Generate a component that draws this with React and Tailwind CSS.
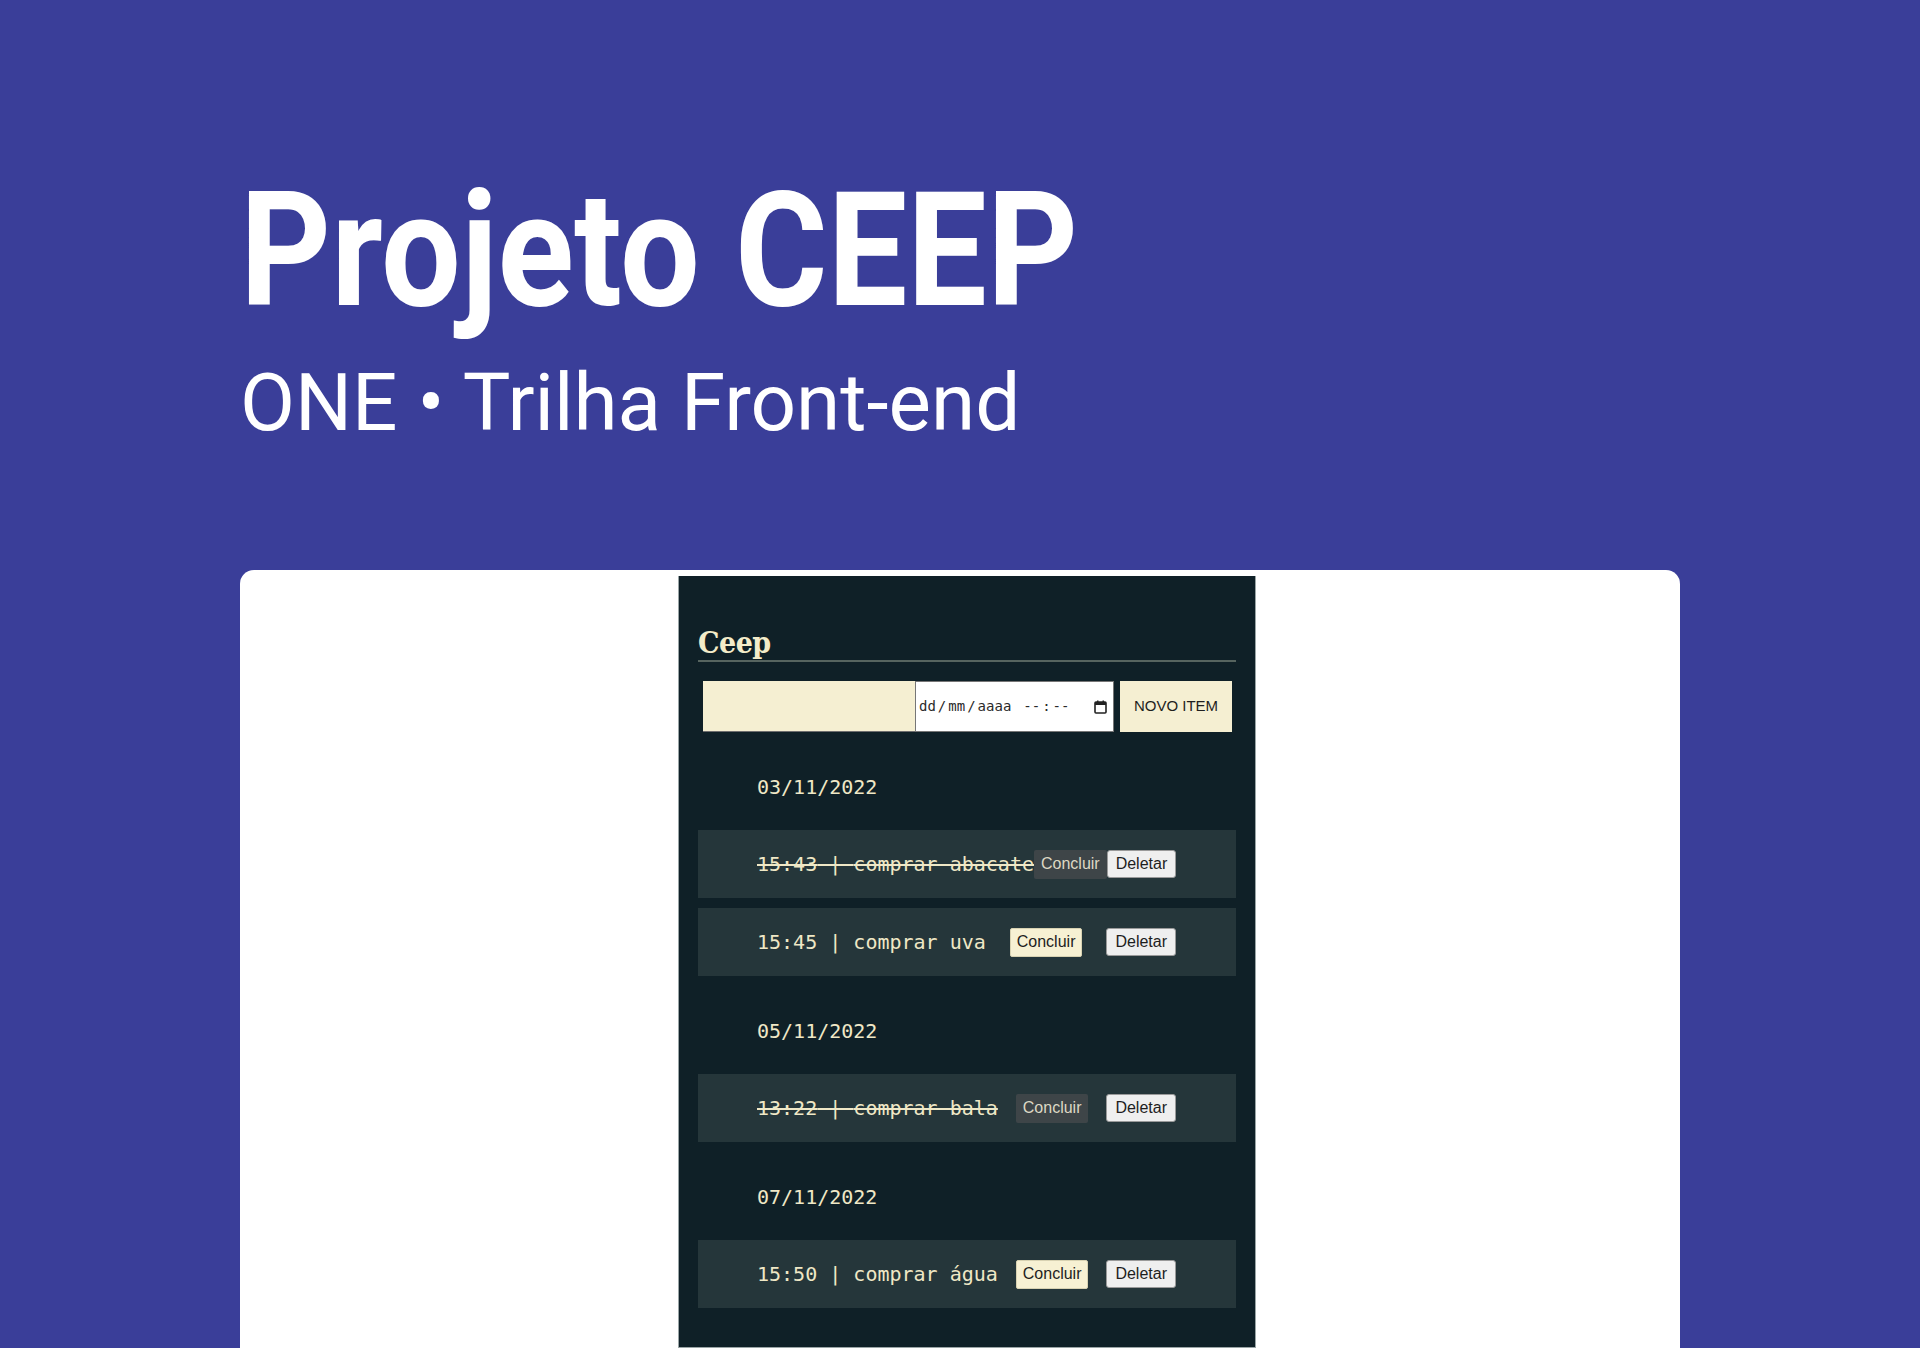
import React from "react";

const groups = [
  {
    date: "03/11/2022",
    items: [
      { time: "15:43", text: "comprar abacate", done: true },
      { time: "15:45", text: "comprar uva", done: false },
    ],
  },
  {
    date: "05/11/2022",
    items: [{ time: "13:22", text: "comprar bala", done: true }],
  },
  {
    date: "07/11/2022",
    items: [{ time: "15:50", text: "comprar água", done: false }],
  },
];

function CalendarIcon() {
  return (
    <svg width="13" height="14" viewBox="0 0 13 14" className="block">
      <rect x="1" y="2" width="11" height="11" rx="1" fill="none" stroke="#222" strokeWidth="1.6" />
      <rect x="1" y="2" width="11" height="3" fill="#222" />
      <rect x="3" y="0.5" width="1.5" height="2.5" fill="#222" />
      <rect x="8.5" y="0.5" width="1.5" height="2.5" fill="#222" />
    </svg>
  );
}

function Item({ time, text, done }) {
  return (
    <li className="h-[68px] bg-[#25363a] flex items-center justify-between pl-[59px] pr-[60px]">
      <span
        className={
          "font-['DejaVu_Sans_Mono',monospace] text-[20px] leading-[24px] text-[#efe8c6] whitespace-pre " +
          (done ? "line-through" : "")
        }
      >
        {time} | {text}
      </span>
      {done ? (
        <button className="h-[29px] px-[7px] rounded-[2px] bg-[#3e4548] text-[#ddd8c4] font-['Liberation_Sans',Arial,sans-serif] text-[16px] leading-[18px]">
          Concluir
        </button>
      ) : (
        <button className="h-[29px] px-[6px] rounded-[2px] border border-[#d8d2b2] bg-[#f7f1d3] text-[#1e1e1e] font-['Liberation_Sans',Arial,sans-serif] text-[16px] leading-[18px]">
          Concluir
        </button>
      )}
      <button className="h-[28px] px-[8px] rounded-[3px] border border-[#9a9a9a] bg-[#efefef] text-[#1e1e1e] font-['Liberation_Sans',Arial,sans-serif] text-[16px] leading-[18px]">
        Deletar
      </button>
    </li>
  );
}

export default function App() {
  return (
    <div className="h-[1348px] overflow-hidden bg-[#3a3e99]">
      <div className="pl-[240px] pt-[171px]">
        <h1 className="font-['Roboto',sans-serif] font-bold text-white text-[159px] leading-[159px] whitespace-nowrap">
          <span className="inline-block origin-left scale-x-[0.89]">Projeto CEEP</span>
        </h1>
        <p className="mt-[33px] font-['Roboto',sans-serif] text-white text-[80px] leading-[81px] whitespace-nowrap">
          ONE • Trilha Front-end
        </p>
      </div>
      <div className="mx-[240px] mt-[126px] h-[778px] bg-white rounded-t-[14px] pt-[6px]">
        <div className="ml-[438px] w-[578px] h-[772px] bg-[#0f2027] border-x border-b border-[#9aa5a6] px-[19px] pt-[50px]">
          <div className="border-b-2 border-[#56645f] pb-[1px]">
            <h2 className="font-['DejaVu_Serif_Condensed','DejaVu_Serif',serif] font-bold text-[30px] leading-[33px] text-[#f3ecc9] tracking-[-0.5px]">
              Ceep
            </h2>
          </div>
          <div className="mt-[19px] pl-[5px] flex items-center h-[51px]">
            <div className="w-[212px] h-[51px] bg-[#f5efd2] border-b border-[#6e6e6e]" />
            <div className="w-[199px] h-[51px] bg-white border border-[#767676] flex items-center pl-[3px] pr-[6px] font-['DejaVu_Sans_Mono',monospace] text-[14px] text-[#2a2a2a]">
              <span>dd</span>
              <span className="mx-[2px]">/</span>
              <span>mm</span>
              <span className="mx-[2px]">/</span>
              <span>aaaa</span>
              <span className="ml-[12px]">--</span>
              <span className="mx-[2px]">:</span>
              <span>--</span>
              <span className="ml-auto">
                <CalendarIcon />
              </span>
            </div>
            <button className="ml-[6px] w-[112px] h-[51px] bg-[#f5efd2] text-[#1e1e1e] font-['Liberation_Sans',Arial,sans-serif] text-[15px]">
              NOVO ITEM
            </button>
          </div>
          {groups.map((g) => (
            <div key={g.date} className="mt-[43px]">
              <p className="pl-[59px] font-['DejaVu_Sans_Mono',monospace] text-[20px] leading-[24px] text-[#efe8c6]">
                {g.date}
              </p>
              <ul className="mt-[31px] flex flex-col gap-[10px]">
                {g.items.map((it) => (
                  <Item key={it.time} {...it} />
                ))}
              </ul>
            </div>
          ))}
        </div>
      </div>
    </div>
  );
}
